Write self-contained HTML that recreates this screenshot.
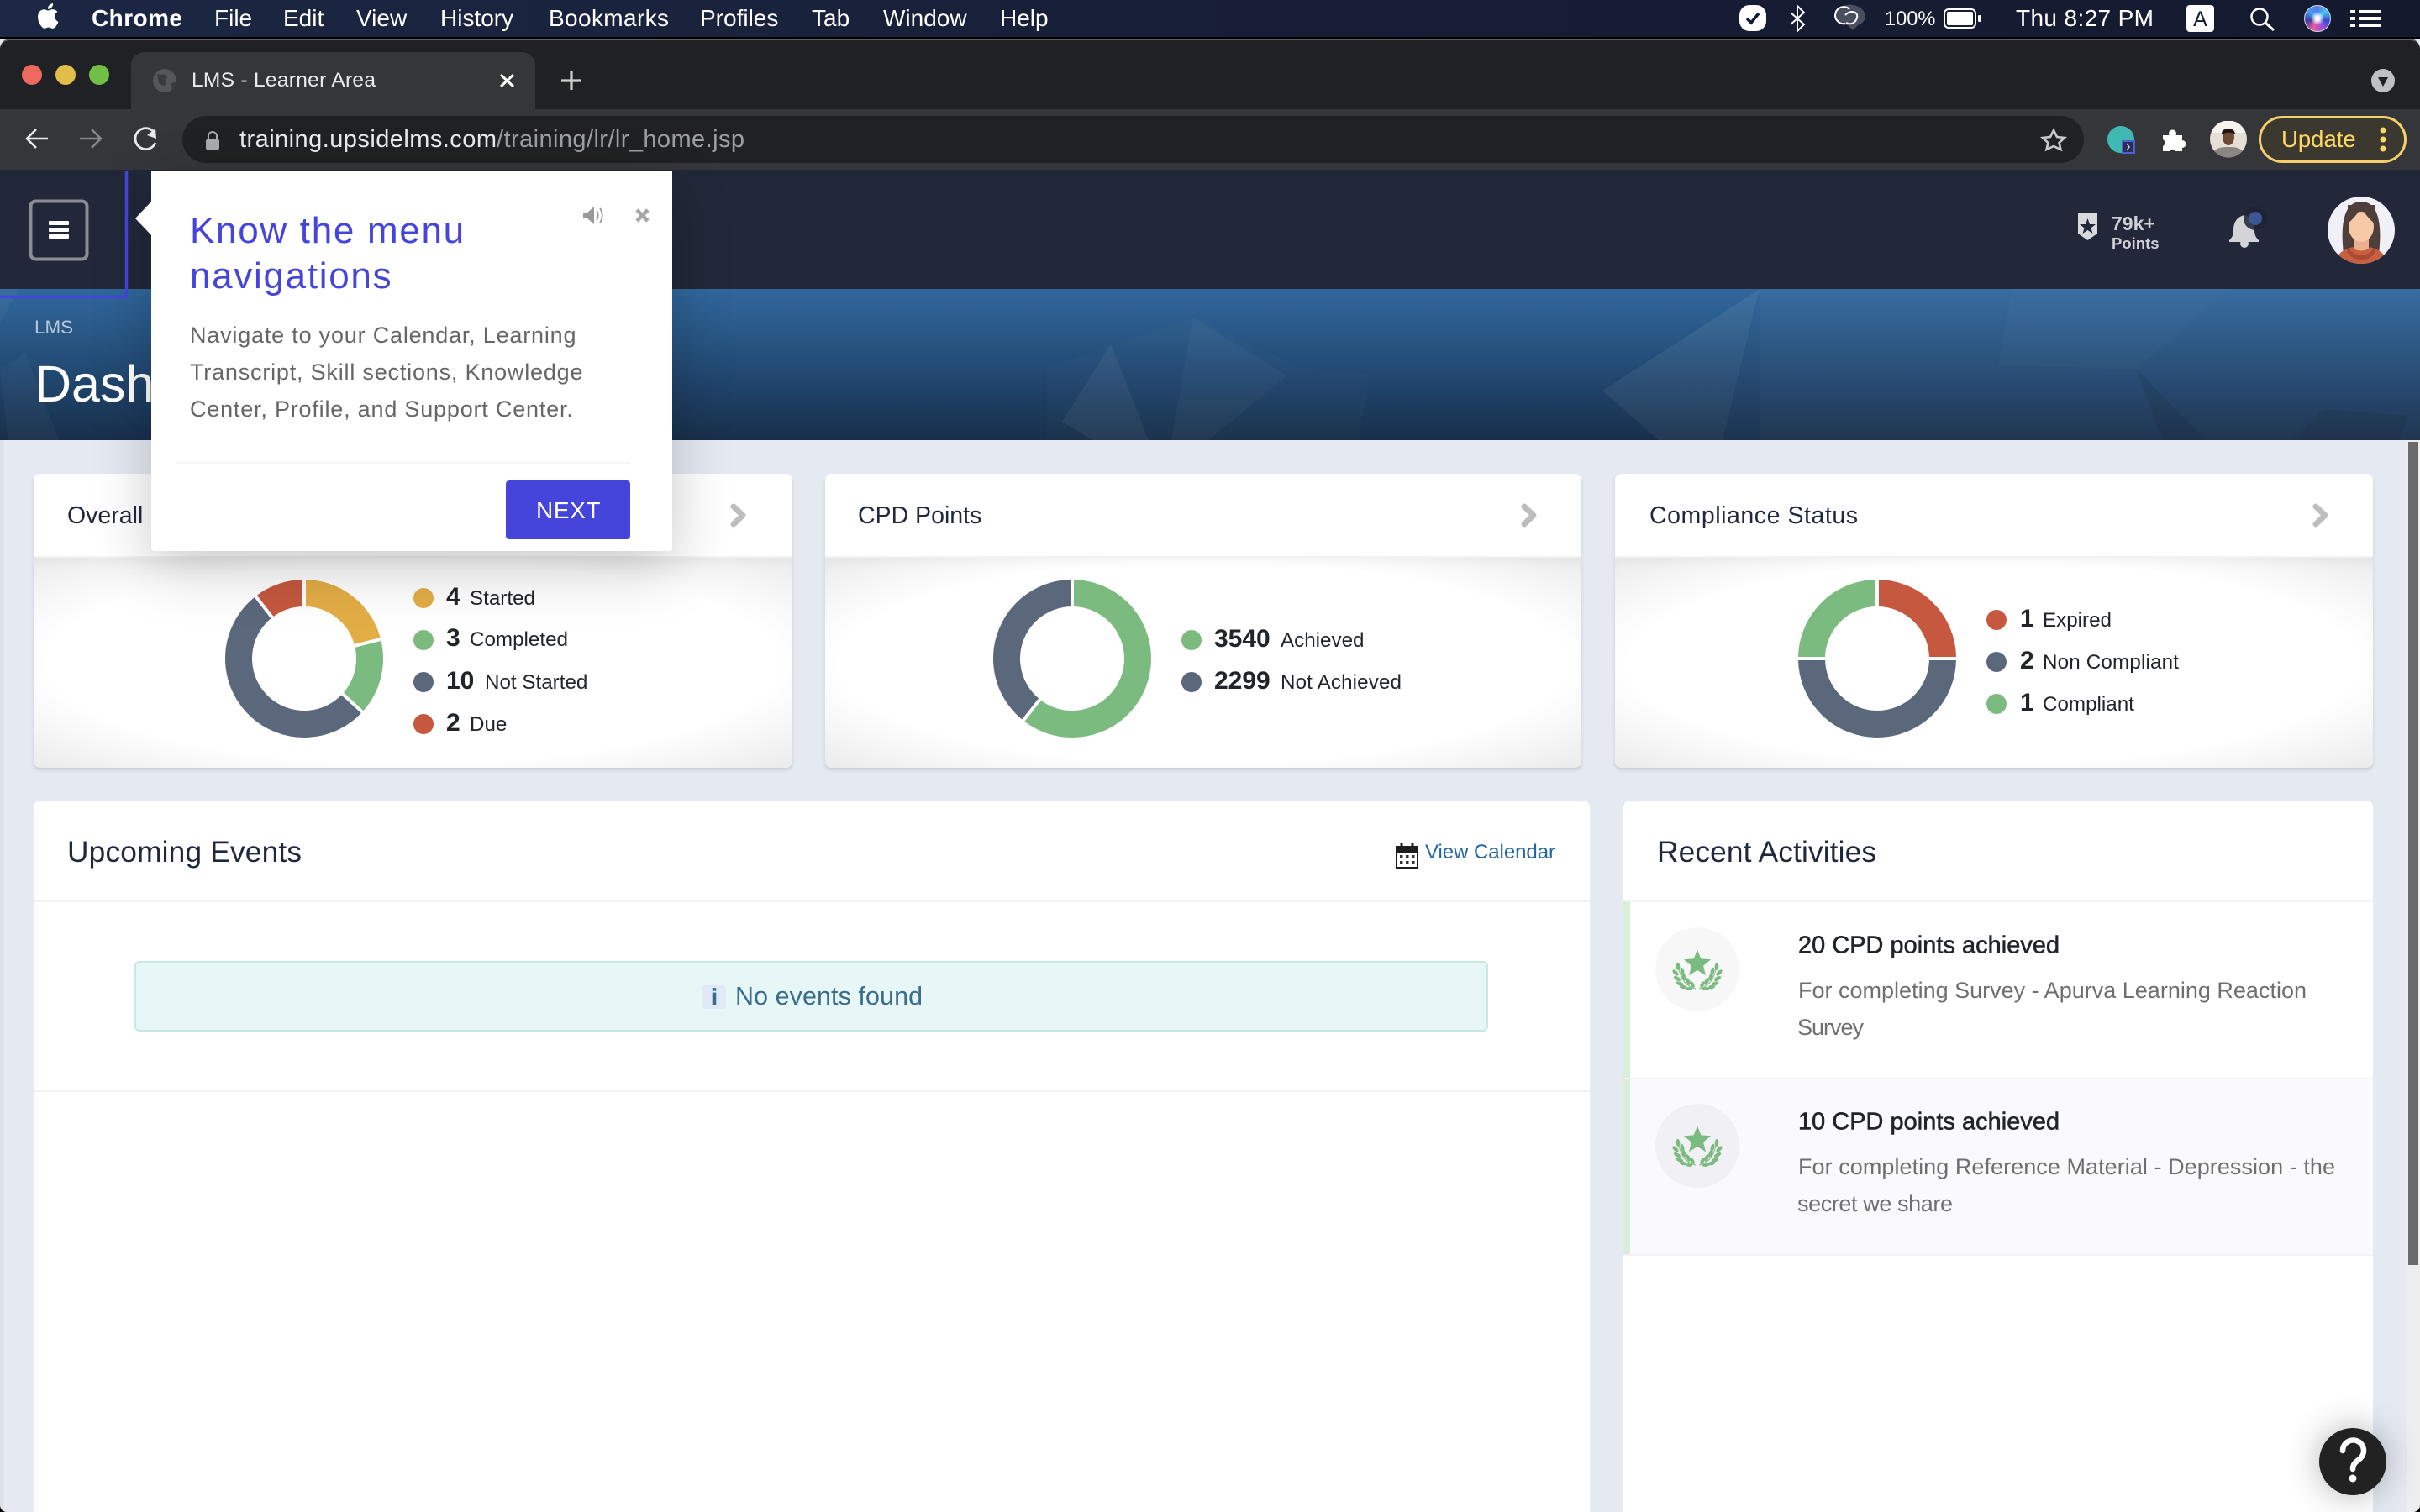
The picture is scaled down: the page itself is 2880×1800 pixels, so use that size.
<!DOCTYPE html>
<html lang="en">
<head>
<meta charset="utf-8">
<title>LMS - Learner Area</title>
<style>
html,body{margin:0;padding:0;width:2880px;height:1800px;overflow:hidden;background:#e5eaf2;font-family:"Liberation Sans",sans-serif}
div{position:absolute;box-sizing:border-box}
svg{position:absolute;left:0;top:0;font-family:"Liberation Sans",sans-serif}
.card{background:#fff;border-radius:8px;box-shadow:0 3px 4px rgba(0,0,0,.12);overflow:hidden}
.cbody{left:0;right:0;top:98px;bottom:0;border-top:2px solid #f2f2f2;background:radial-gradient(ellipse farthest-corner at center,#fff 68%,#ebebeb 100%);box-shadow:inset 0 14px 18px -12px rgba(0,0,0,.05)}
.ct{font-size:28.5px;fill:#20283d}
.h{font-size:35.3px;fill:#20283d}
.n{font-size:30px;font-weight:700;fill:#212529}
.l{font-size:24.2px;fill:#212529}
.m{font-size:28px;fill:#fff}
.ah{font-size:28.8px;fill:#212529;stroke:#212529;stroke-width:.6px}
.ad{font-size:27px;fill:#6f6f6f}
.pb{font-size:27px;fill:#666;letter-spacing:.8px}
.pt{font-size:44px;fill:#4545dc;letter-spacing:1.7px}
</style>
</head>
<body>
<!-- mac menu bar -->
<div style="left:0;top:0;width:2880px;height:44px;background:linear-gradient(90deg,#1c2743,#171d35 60%,#141a2e)"></div>
<div style="left:0;top:44px;width:2880px;height:3px;background:#000"></div>
<!-- chrome -->
<div style="left:0;top:46px;width:2880px;height:90px;background:#202124;border-top:2px solid #5f6063;border-radius:12px 12px 0 0"></div>
<div style="left:0;top:130px;width:2880px;height:74px;background:#35363a"></div>
<div style="left:156px;top:62px;width:481px;height:70px;background:#35363a;border-radius:16px 16px 0 0"></div>
<div style="left:217px;top:138px;width:2263px;height:56px;background:#202124;border-radius:28px"></div>
<div style="left:2688px;top:138px;width:176px;height:56px;background:#3b3830;border:3px solid #f6cf6b;border-radius:28px"></div>
<!-- site header -->
<div style="left:0;top:202px;width:2880px;height:142px;background:#222839"></div>
<!-- banner -->
<div style="left:0;top:344px;width:2880px;height:180px;overflow:hidden;background:linear-gradient(180deg,#31679d 0%,#2a5a8a 25%,#1f4369 65%,#182f4c 100%)">
<svg width="2880" height="180" viewBox="0 344 2880 180">
<defs><linearGradient id="fd" x1="0" y1="0" x2="0" y2="1"><stop offset="0" stop-color="#fff" stop-opacity=".07"/><stop offset="1" stop-color="#fff" stop-opacity=".05"/></linearGradient></defs>
<rect x="2095" y="344" width="785" height="180" fill="#fff" fill-opacity=".035"/>
<polygon points="1246,438 1420,378 1545,437 1630,445 1617,524 1246,524" fill="#fff" fill-opacity=".016"/>
<polygon points="1322,410 1264,502 1300,524 1367,524" fill="#fff" fill-opacity=".05"/>
<polygon points="1420,378 1394,524 1438,524 1532,447" fill="#fff" fill-opacity=".03"/>
<polygon points="2095,344 1907,465 1974,524 2050,524 2090,360" fill="url(#fd)"/>
<polygon points="2095,344 2050,524 2095,524 2095,344" fill="#fff" fill-opacity=".02"/>
<polygon points="2652,344 2543,440 2378,434 2395,344" fill="#fff" fill-opacity=".02"/>
<polygon points="2543,440 2573,524 2626,524" fill="#000" fill-opacity=".07"/>
<polygon points="2765,487 2728,524 2856,524 2865,495" fill="#000" fill-opacity=".06"/>
<polygon points="0,344 22,344 0,385" fill="#fff" fill-opacity=".04"/>
<polygon points="0,440 30,420 70,524 10,524" fill="#fff" fill-opacity=".03"/>
</svg>
</div>
<!-- page scrollbar -->
<div style="left:2864px;top:524px;width:16px;height:1276px;background:#eee"></div>
<div style="left:2866px;top:526px;width:12px;height:980px;background:#6b6b6b"></div>
<div style="left:0;top:524px;width:3px;height:1276px;background:#dce1e7"></div>
<!-- cards -->
<div class="card" style="left:40px;top:564px;width:903px;height:350px"><div class="cbody"></div></div>
<div class="card" style="left:982px;top:564px;width:900px;height:350px"><div class="cbody"></div></div>
<div class="card" style="left:1922px;top:564px;width:902px;height:350px"><div class="cbody"></div></div>
<div class="card" style="left:40px;top:953px;width:1852px;height:847px;border-radius:8px 8px 0 0;box-shadow:none">
  <div style="left:0;right:0;top:119px;height:2px;background:#f2f2f2"></div>
  <div style="left:120px;top:191px;width:1611px;height:84px;background:#e7f6f6;border:2px solid #c5e9e3;border-radius:6px"></div>
  <div style="left:796px;top:220px;width:28px;height:28px;background:#dfeaf6;border-radius:4px"></div>
  <div style="left:0;right:0;top:345px;height:2px;background:#f2f2f2"></div>
</div>
<div class="card" style="left:1932px;top:953px;width:892px;height:847px;border-radius:8px 8px 0 0;box-shadow:none">
  <div style="left:0;right:0;top:119px;height:2px;background:#f2f2f2"></div>
  <div style="left:0;top:121px;width:8px;height:420px;background:#d9eed9"></div>
  <div style="left:8px;right:0;top:332px;height:209px;background:#f9f9fe"></div>
  <div style="left:0;right:0;top:330px;height:2px;background:#f2f2f2"></div>
  <div style="left:0;right:0;top:540px;height:2px;background:#f2f2f2"></div>
  <div style="left:38px;top:151px;width:100px;height:100px;background:#f7f7f7;border-radius:50%"></div>
  <div style="left:38px;top:361px;width:100px;height:100px;background:#f1f1f5;border-radius:50%"></div>
</div>
<!-- siri -->
<div style="left:2742px;top:6px;width:32px;height:32px;border-radius:50%;border:1.5px solid #d8d8e0;background:radial-gradient(circle,#fff 0 10%,transparent 38%),conic-gradient(#5b7bf0,#43c7e8,#3a4bd0,#a04fd8,#e85a9a,#3a3fa8,#43a0e8,#5b7bf0)"></div>

<svg width="2880" height="1800" viewBox="0 0 2880 1800">
<defs>
  <g id="leaf"><ellipse cx="23" cy="-2.5" rx="4.6" ry="2.3" transform="rotate(-85 23 -2.5)"/><ellipse cx="26" cy="5" rx="4.6" ry="2.3" transform="rotate(-45 26 5)"/><ellipse cx="18" cy="3.3" rx="4.6" ry="2.3" transform="rotate(-75 18 3.3)"/><ellipse cx="24" cy="12" rx="4.6" ry="2.3" transform="rotate(-30 24 12)"/><ellipse cx="16" cy="10" rx="4.6" ry="2.3" transform="rotate(-70 16 10)"/><ellipse cx="21" cy="18" rx="4.6" ry="2.3" transform="rotate(-20 21 18)"/><ellipse cx="11" cy="15.5" rx="4.6" ry="2.3" transform="rotate(-65 11 15.5)"/><ellipse cx="17" cy="22" rx="4.2" ry="2.1" transform="rotate(-10 17 22)"/><ellipse cx="6" cy="19" rx="4.2" ry="2.1" transform="rotate(-60 6 19)"/><ellipse cx="10" cy="24" rx="4.2" ry="1.9" transform="rotate(-5 10 24)"/><path d="M2 24C12 22 19 14 22 1" fill="none" stroke="#7cbb80" stroke-width="1"/></g>
  <g id="award" fill="#7cbb80"><polygon points="0,-22.5 4.4,-11.6 16.2,-10.8 7.1,-3.2 10,8.3 0,2 -10,8.3 -7.1,-3.2 -16.2,-10.8 -4.4,-11.6"/><use href="#leaf"/><use href="#leaf" transform="scale(-1,1)"/></g>
  <polyline id="chev" points="0,0 11,10.5 0,21" fill="none" stroke="#bdbdbd" stroke-width="7" stroke-linecap="round" stroke-linejoin="round"/>
</defs>

<!-- menu bar -->
<path transform="translate(37.6,1) scale(1.48)" fill="#fff" d="M18.7 12.6c0-2.5 2-3.7 2.1-3.8-1.2-1.7-3-1.9-3.6-1.9-1.5-.2-3 .9-3.8.9-.8 0-2-.9-3.3-.9-1.7 0-3.3 1-4.2 2.5-1.8 3.1-.5 7.7 1.3 10.2.9 1.2 1.9 2.6 3.2 2.6 1.3-.1 1.8-.8 3.3-.8s2 .8 3.3.8c1.4 0 2.3-1.2 3.1-2.5 1-1.4 1.4-2.8 1.4-2.9-.1 0-2.7-1-2.8-4.2zM16.2 5.2c.7-.8 1.2-2 1-3.2-1 .1-2.3.7-3 1.5-.7.7-1.2 1.9-1.1 3.1 1.2.1 2.4-.6 3.1-1.4z"/>
<text class="m" x="109" y="31" font-weight="700" textLength="108">Chrome</text>
<text class="m" x="255" y="31">File</text>
<text class="m" x="337" y="31">Edit</text>
<text class="m" x="424" y="31">View</text>
<text class="m" x="524" y="31">History</text>
<text class="m" x="653" y="31" textLength="143">Bookmarks</text>
<text class="m" x="833" y="31">Profiles</text>
<text class="m" x="966" y="31">Tab</text>
<text class="m" x="1051" y="31">Window</text>
<text class="m" x="1190" y="31">Help</text>

<rect x="2070" y="6" width="32" height="31" rx="12" fill="#fff"/>
<path d="M2079 22l5 5 9-11" fill="none" stroke="#111a30" stroke-width="3.5"/>
<path d="M2131 15L2147 29 2139 37V7L2147 15 2131 29" fill="none" stroke="#fff" stroke-width="2"/>
<path d="M2183 20a18 14 0 0 1 37 0q0 6-9 10l-6 6-6-6q-16-2-16-10z" fill="#4a4f60"/>
<path d="M2201 11a10 10 0 1 0-5 17M2196 18c6-7 16-4 14 3s-8 9-13 6" fill="none" stroke="#fff" stroke-width="2"/>
<text x="2243" y="30" font-size="23.6" fill="#fff">100%</text>
<rect x="2314" y="11" width="37" height="22" rx="5" fill="none" stroke="#fff" stroke-width="2"/>
<rect x="2317" y="14" width="31" height="16" rx="2" fill="#fff"/>
<rect x="2354" y="18" width="3.5" height="8" rx="1.5" fill="#fff"/>
<text class="m" x="2399" y="31" textLength="164">Thu 8:27 PM</text>
<rect x="2602" y="6" width="33" height="32" rx="4" fill="#fff"/>
<text x="2618.5" y="31" font-size="25" fill="#111a30" text-anchor="middle">A</text>
<circle cx="2689" cy="20" r="9.5" fill="none" stroke="#fff" stroke-width="2.5"/>
<line x1="2696" y1="27" x2="2706" y2="36" stroke="#fff" stroke-width="3"/>
<g fill="#fff"><rect x="2797" y="12" width="6" height="4"/><rect x="2808" y="12" width="26" height="4"/><rect x="2797" y="20" width="6" height="4"/><rect x="2808" y="20" width="26" height="4"/><rect x="2797" y="28" width="6" height="4"/><rect x="2808" y="28" width="26" height="4"/></g>

<!-- traffic lights -->
<circle cx="38" cy="89" r="12" fill="#ee6a5f"/><circle cx="78" cy="89" r="12" fill="#e3bd4c"/><circle cx="118" cy="89" r="12" fill="#71bf46"/>
<!-- tab -->
<circle cx="196" cy="96" r="14" fill="#55565a"/>
<path d="M187 88c5 2 8-1 11 2s-3 5-1 9-6 3-8 0zM203 100c3-2 6-3 7-1-1 4-4 7-7 8z" fill="#3a3b3f"/>
<text x="228" y="103" font-size="24.5" fill="#e8eaed" textLength="219">LMS - Learner Area</text>
<path d="M596 89l15 14M611 89l-15 14" stroke="#fff" stroke-width="3"/>
<path d="M680 85v22M668 96h24" stroke="#d0d1d3" stroke-width="3.2"/>
<circle cx="2836" cy="96" r="14" fill="#bdc1c6"/>
<polygon points="2830,92 2842,92 2836,103" fill="#202124"/>
<!-- toolbar -->
<path d="M57 165H33M43 154L32 165 43 176" fill="none" stroke="#e8eaed" stroke-width="2.6"/>
<path d="M95 165H119M109 154L120 165 109 176" fill="none" stroke="#85878a" stroke-width="2.6"/>
<path d="M185 170a12.5 12.5 0 1 1-2-13" fill="none" stroke="#e8eaed" stroke-width="2.8"/>
<polygon points="185,153 186,165 175,161" fill="#e8eaed"/>
<rect x="245" y="166" width="16" height="12" rx="2" fill="#a8abaf"/>
<path d="M248 166v-4a5 5 0 0 1 10 0v4" fill="none" stroke="#a8abaf" stroke-width="2"/>
<text x="285" y="175" font-size="29" fill="#e8eaed" textLength="306">training.upsidelms.com</text>
<text x="591" y="175" font-size="29" fill="#9aa0a6" textLength="295">/training/lr/lr_home.jsp</text>
<polygon points="2444,155 2448,163 2457,164 2450.5,170 2452.5,178 2444,174 2435.5,178 2437.5,170 2431,164 2440,163" fill="none" stroke="#c8cacd" stroke-width="2.6"/>
<path d="M2508 166a16 16 0 0 1 32 0v4h-14v12a16 16 0 0 1-18-16z" fill="#3fb8b4"/>
<rect x="2526" y="168" width="14" height="14" fill="#2b2f55" stroke="#4d62d6" stroke-width="2"/>
<path d="M2531 171l3 4-3 4" fill="none" stroke="#ddd" stroke-width="1.4"/>
<path d="M2574 161h7.500a4.500 4.500 0 1 1 8 0h7.500v6a4.500 4.500 0 1 1 0 9v4h-8a4 4 0 0 0-7 0h-8v-6a4.500 4.500 0 0 0 0-8z" fill="#fff"/>
<defs><clipPath id="pp"><circle cx="2652" cy="165.5" r="22"/></clipPath><clipPath id="av"><circle cx="2810" cy="274" r="40"/></clipPath></defs>
<g clip-path="url(#pp)"><rect x="2630" y="144" width="44" height="44" fill="#e6dfd8"/><rect x="2630" y="144" width="44" height="14" fill="#f6f2ee"/><path d="M2632 188c2-12 10-13 20-13s18 1 20 13z" fill="#8b8583"/><ellipse cx="2652" cy="163" rx="7" ry="10" fill="#6e4a36"/><path d="M2644 160c-1-9 16-10 16 0-4-3-11-3-16 0z" fill="#201612"/></g>
<text x="2715" y="175" font-size="27.5" fill="#fdd663">Update</text>
<g fill="#fdd663"><circle cx="2836" cy="155" r="3.5"/><circle cx="2836" cy="166" r="3.5"/><circle cx="2836" cy="177" r="3.5"/></g>

<!-- header left -->
<path d="M150.5 204V353.5H0" fill="none" stroke="#4545dc" stroke-width="3.5"/>
<rect x="36.5" y="239.5" width="67" height="69" rx="6" fill="none" stroke="#8a8d96" stroke-width="4"/>
<g fill="#fff"><rect x="58" y="263" width="24" height="5" rx="1"/><rect x="58" y="271" width="24" height="5" rx="1"/><rect x="58" y="279" width="24" height="5" rx="1"/></g>
<!-- header right -->
<path d="M2473 253h23v25l-11.5 8-11.5-8z" fill="#d9dade"/>
<polygon points="2484.5,260 2487,267 2494,267 2488.5,271.5 2490.5,278 2484.5,274 2478.5,278 2480.5,271.5 2475,267 2482,267" fill="#222839"/>
<text x="2513" y="274" font-size="23" font-weight="700" fill="#cfd1d6">79k+</text>
<text x="2513" y="296" font-size="18.5" font-weight="700" fill="#cfd1d6">Points</text>
<path d="M2671 256c9 2 12 9 12 18 0 7 3 10 5 12v2h-35v-2c2-2 5-5 5-12 0-9 4-16 13-18z" fill="#d2d4d8"/>
<circle cx="2671" cy="290" r="5" fill="#d2d4d8"/>
<circle cx="2684" cy="260" r="14" fill="#1f2233" opacity=".85"/>
<circle cx="2684" cy="260" r="8" fill="#3c5596"/>
<g clip-path="url(#av)">
  <rect x="2770" y="234" width="80" height="80" fill="#f0f0f6"/>
  <path d="M2789 302c-4-34 0-62 21-62s25 28 21 62z" fill="#4e3f3b"/>
  <path d="M2801 283h18v16a9 8 0 0 1-18 0z" fill="#eab18c"/>
  <ellipse cx="2810" cy="270" rx="15" ry="18" fill="#f6caa6"/>
  <path d="M2794 266c5-4 12-11 16-20 4 9 11 16 16 20v-22h-32z" fill="#4e3f3b"/>
  <path d="M2779 314c1-12 10-17 21-20 2 6 18 6 20 0 11 3 20 8 21 20z" fill="#c85f41"/>
  <path d="M2796 296c3 10 25 10 28 0l3 2c-4 15-30 15-34 0z" fill="#a94a33"/>
</g>

<!-- banner text -->
<text x="41" y="397" font-size="22.4" fill="#b9c7d6">LMS</text>
<text x="41" y="478" font-size="61" fill="#fff">Dashboard</text>

<!-- card 1 -->
<text class="ct" x="80" y="623">Overall Learning Status</text>
<use href="#chev" x="873" y="603"/>
<g transform="translate(362,784)" fill="none" stroke-width="32">
  <circle r="78" transform="rotate(-90)" pathLength="360" stroke="#e3ad46" stroke-dasharray="75.8 360"/>
  <circle r="78" transform="rotate(-14.2)" pathLength="360" stroke="#7cbb80" stroke-dasharray="56.8 360"/>
  <circle r="78" transform="rotate(42.6)" pathLength="360" stroke="#5b677b" stroke-dasharray="189.5 360"/>
  <circle r="78" transform="rotate(232.1)" pathLength="360" stroke="#c5583f" stroke-dasharray="37.9 360"/>
  <g stroke="#fff" stroke-width="4"><line y1="-58" y2="-98"/><line y1="-58" y2="-98" transform="rotate(75.8)"/><line y1="-58" y2="-98" transform="rotate(132.6)"/><line y1="-58" y2="-98" transform="rotate(322.1)"/></g>
</g>
<circle cx="504" cy="712" r="12" fill="#e3ad46"/><circle cx="504" cy="762" r="12" fill="#7cbb80"/><circle cx="504" cy="812" r="12" fill="#5b677b"/><circle cx="504" cy="862" r="12" fill="#c5583f"/>
<text class="n" x="531" y="720">4</text><text class="l" x="559" y="720">Started</text>
<text class="n" x="531" y="769">3</text><text class="l" x="559" y="769">Completed</text>
<text class="n" x="531" y="820">10</text><text class="l" x="577" y="820">Not Started</text>
<text class="n" x="531" y="870">2</text><text class="l" x="559" y="870">Due</text>

<!-- card 2 -->
<text class="ct" x="1021" y="623">CPD Points</text>
<use href="#chev" x="1814" y="603"/>
<g transform="translate(1276,784)" fill="none" stroke-width="32">
  <circle r="78" transform="rotate(-90)" pathLength="360" stroke="#7cbb80" stroke-dasharray="218.3 360"/>
  <circle r="78" transform="rotate(128.3)" pathLength="360" stroke="#5b677b" stroke-dasharray="141.7 360"/>
  <g stroke="#fff" stroke-width="4"><line y1="-58" y2="-98"/><line y1="-58" y2="-98" transform="rotate(218.3)"/></g>
</g>
<circle cx="1418" cy="762" r="12" fill="#7cbb80"/><circle cx="1418" cy="812" r="12" fill="#5b677b"/>
<text class="n" x="1445" y="770">3540</text><text class="l" x="1524" y="770">Achieved</text>
<text class="n" x="1445" y="820">2299</text><text class="l" x="1524" y="820" textLength="144">Not Achieved</text>

<!-- card 3 -->
<text class="ct" x="1963" y="623" textLength="248">Compliance Status</text>
<use href="#chev" x="2756" y="603"/>
<g transform="translate(2234,784)" fill="none" stroke-width="32">
  <circle r="78" transform="rotate(-90)" pathLength="360" stroke="#c5583f" stroke-dasharray="90 360"/>
  <circle r="78" pathLength="360" stroke="#5b677b" stroke-dasharray="180 360"/>
  <circle r="78" transform="rotate(180)" pathLength="360" stroke="#7cbb80" stroke-dasharray="90 360"/>
  <g stroke="#fff" stroke-width="4"><line y1="-58" y2="-98"/><line x1="58" x2="98"/><line x1="-58" x2="-98"/></g>
</g>
<circle cx="2376" cy="738" r="12" fill="#c5583f"/><circle cx="2376" cy="788" r="12" fill="#5b677b"/><circle cx="2376" cy="838" r="12" fill="#7cbb80"/>
<text class="n" x="2404" y="746">1</text><text class="l" x="2431" y="746">Expired</text>
<text class="n" x="2404" y="796">2</text><text class="l" x="2431" y="796" textLength="162">Non Compliant</text>
<text class="n" x="2404" y="846">1</text><text class="l" x="2431" y="846">Compliant</text>

<!-- upcoming -->
<text class="h" x="80" y="1026" textLength="279">Upcoming Events</text>
<rect x="1662" y="1008" width="25" height="25" fill="none" stroke="#1e1e1e" stroke-width="2"/>
<rect x="1662" y="1008" width="25" height="7" fill="#1e1e1e"/>
<path d="M1668 1003v8M1681 1003v8" stroke="#1e1e1e" stroke-width="3"/>
<g fill="#333"><rect x="1666" y="1018" width="3.5" height="3.5"/><rect x="1673" y="1018" width="3.5" height="3.5"/><rect x="1680" y="1018" width="3.5" height="3.5"/><rect x="1666" y="1025" width="3.5" height="3.5"/><rect x="1673" y="1025" width="3.5" height="3.5"/><rect x="1680" y="1025" width="3.5" height="3.5"/></g>
<text x="1696" y="1022" font-size="24" fill="#1f67a5" textLength="155">View Calendar</text>
<text x="850" y="1196" font-size="27" font-weight="700" fill="#3a6d8c" stroke="#3a6d8c" stroke-width=".8" text-anchor="middle">i</text>
<text x="875" y="1196" font-size="30.4" fill="#3a6d8c" textLength="223">No events found</text>

<!-- recent -->
<text class="h" x="1972" y="1026" textLength="261">Recent Activities</text>
<use href="#award" x="2020" y="1153"/>
<use href="#award" x="2020" y="1363"/>
<text class="ah" x="2140" y="1134.5" textLength="311">20 CPD points achieved</text>
<text class="ad" x="2140" y="1188" textLength="605">For completing Survey - Apurva Learning Reaction</text>
<text class="ad" x="2139" y="1232" textLength="79">Survey</text>
<text class="ah" x="2140" y="1344.5" textLength="311">10 CPD points achieved</text>
<text class="ad" x="2140" y="1398" textLength="639">For completing Reference Material - Depression - the</text>
<text class="ad" x="2139" y="1442" textLength="185">secret we share</text>

<!-- help -->
<circle cx="2800" cy="1740" r="40" fill="#222"/>
</svg>
<div style="left:2760px;top:1700px;width:80px;height:80px;border-radius:50%;box-shadow:0 0 40px rgba(0,0,0,.3)"></div>
<svg width="2880" height="1800" viewBox="0 0 2880 1800">
<path d="M2788 1727a12.5 12.5 0 1 1 20 10c-5 4-8 6-8 12" fill="none" stroke="#fff" stroke-width="6.5" stroke-linecap="round"/>
<circle cx="2800" cy="1760" r="4.5" fill="#fff"/>
<path d="M2872 1800h8v-8a8 8 0 0 1-8 8z" fill="#000"/>
<path d="M8 1800h-8v-8a8 8 0 0 0 8 8z" fill="#000"/>
</svg>

<!-- tour popup -->
<div style="left:160px;top:204px;width:640px;height:452px">
  <div style="left:20px;top:0;width:620px;height:452px;background:#fff;border-radius:0 0 4px 4px;box-shadow:0 20px 70px rgba(0,0,0,.22)"></div>
  <div style="left:49px;top:346px;width:541px;height:2px;background:#f5f5f5"></div>
  <div style="left:442px;top:368px;width:148px;height:70px;background:#4545dc;border-radius:4px"></div>
</div>
<svg width="2880" height="1800" viewBox="0 0 2880 1800">
<polygon points="161,260 181,239 181,281" fill="#fff"/>
<text class="pt" x="226" y="289">Know the menu</text>
<text class="pt" x="226" y="343">navigations</text>
<path d="M694 253h5l8-7v21l-8-7h-5z" fill="#999"/>
<path d="M710 251a10 10 0 0 1 0 11M714 248a15 15 0 0 1 0 17" fill="none" stroke="#999" stroke-width="1.8"/>
<path d="M758 250l13 13M771 250l-13 13" stroke="#a6a6a6" stroke-width="4.5"/>
<text class="pb" x="226" y="408">Navigate to your Calendar, Learning</text>
<text class="pb" x="226" y="452">Transcript, Skill sections, Knowledge</text>
<text class="pb" x="226" y="496">Center, Profile, and Support Center.</text>
<text x="638" y="617" font-size="28" letter-spacing=".6" fill="#fff">NEXT</text>
</svg>
</body>
</html>
